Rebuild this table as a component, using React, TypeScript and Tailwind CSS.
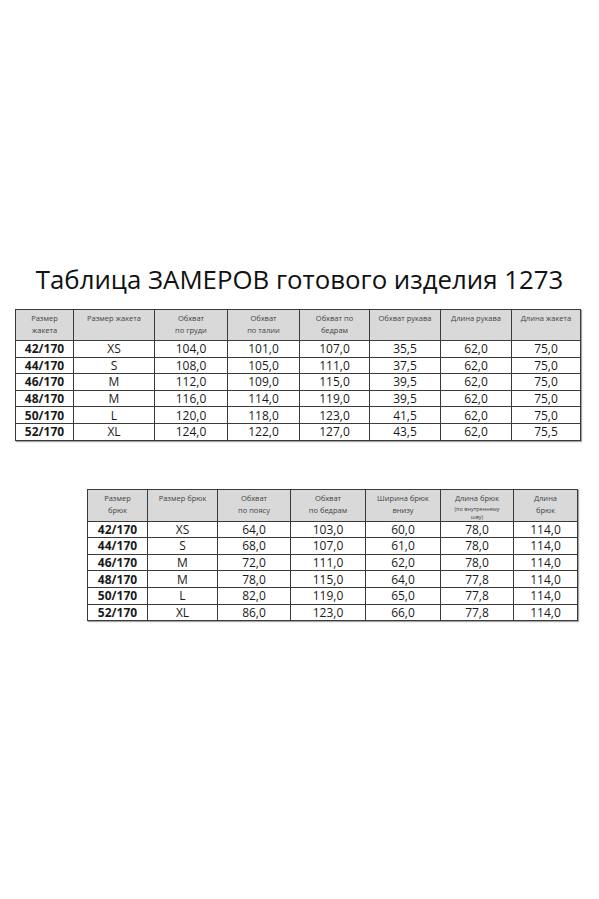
const font = { fontFamily: '"Open Sans", "Noto Sans", sans-serif' };

type Col = { w: string; head: React.ReactNode };

const jacketCols: Col[] = [
  { w: "w-[58px]", head: <>Размер<br />жакета</> },
  { w: "w-[81px]", head: "Размер жакета" },
  { w: "w-[73px]", head: <>Обхват<br />по груди</> },
  { w: "w-[72px]", head: <>Обхват<br />по талии</> },
  { w: "w-[70px]", head: <>Обхват по<br />бедрам</> },
  { w: "w-[71px]", head: "Обхват рукава" },
  { w: "w-[71px]", head: "Длина рукава" },
  { w: "w-[69px]", head: "Длина жакета" },
];

const jacketRows = [
  ["42/170", "XS", "104,0", "101,0", "107,0", "35,5", "62,0", "75,0"],
  ["44/170", "S", "108,0", "105,0", "111,0", "37,5", "62,0", "75,0"],
  ["46/170", "M", "112,0", "109,0", "115,0", "39,5", "62,0", "75,0"],
  ["48/170", "M", "116,0", "114,0", "119,0", "39,5", "62,0", "75,0"],
  ["50/170", "L", "120,0", "118,0", "123,0", "41,5", "62,0", "75,0"],
  ["52/170", "XL", "124,0", "122,0", "127,0", "43,5", "62,0", "75,5"],
];

const trouserCols: Col[] = [
  { w: "w-[60px]", head: <>Размер<br />брюк</> },
  { w: "w-[70px]", head: "Размер брюк" },
  { w: "w-[73px]", head: <>Обхват<br />по поясу</> },
  { w: "w-[75px]", head: <>Обхват<br />по бедрам</> },
  { w: "w-[75px]", head: <>Ширина брюк<br />внизу</> },
  {
    w: "w-[73px]",
    head: (
      <>
        Длина брюк
        <span className="block text-[5.5px] leading-[8px] mt-[1px]">
          (по внутреннему
          <br />
          шву)
        </span>
      </>
    ),
  },
  { w: "w-[64px]", head: <>Длина<br />брюк</> },
];

const trouserRows = [
  ["42/170", "XS", "64,0", "103,0", "60,0", "78,0", "114,0"],
  ["44/170", "S", "68,0", "107,0", "61,0", "78,0", "114,0"],
  ["46/170", "M", "72,0", "111,0", "62,0", "78,0", "114,0"],
  ["48/170", "M", "78,0", "115,0", "64,0", "77,8", "114,0"],
  ["50/170", "L", "82,0", "119,0", "65,0", "77,8", "114,0"],
  ["52/170", "XL", "86,0", "123,0", "66,0", "77,8", "114,0"],
];

function SizeTable({ cols, rows, headH }: { cols: Col[]; rows: string[][]; headH: string }) {
  return (
    <table className="table-fixed border-collapse border border-[#3a3a3a] shadow-[1px_1px_1px_rgba(0,0,0,0.35)]">
      <thead>
        <tr className={headH}>
          {cols.map((c, i) => (
            <th
              key={i}
              className={`${c.w} border border-[#3a3a3a] bg-[#d9d9d9] px-[2px] pt-[2px] align-top text-center text-[7.5px] font-normal leading-[12px] text-[#444]`}
            >
              {c.head}
            </th>
          ))}
        </tr>
      </thead>
      <tbody>
        {rows.map((r, ri) => (
          <tr key={ri} className="h-[16.6px]">
            {r.map((v, ci) => (
              <td
                key={ci}
                className={`border border-[#3a3a3a] p-0 text-center text-[12px] leading-[15px] text-[#1a1a1a] ${
                  ci === 0 ? "font-bold" : ""
                }`}
              >
                {v}
              </td>
            ))}
          </tr>
        ))}
      </tbody>
    </table>
  );
}

export default function App() {
  return (
    <div className="w-[599px] h-[899px] bg-white flex flex-col" style={font}>
      <h1 className="mt-[262px] text-center text-[25.8px] leading-[34px] font-normal text-[#111]">
        Таблица ЗАМЕРОВ готового изделия 1273
      </h1>
      <div className="mt-[13px] pl-[15px]">
        <SizeTable cols={jacketCols} rows={jacketRows} headH="h-[31px]" />
      </div>
      <div className="mt-[48px] pl-[87px]">
        <SizeTable cols={trouserCols} rows={trouserRows} headH="h-[32px]" />
      </div>
    </div>
  );
}
